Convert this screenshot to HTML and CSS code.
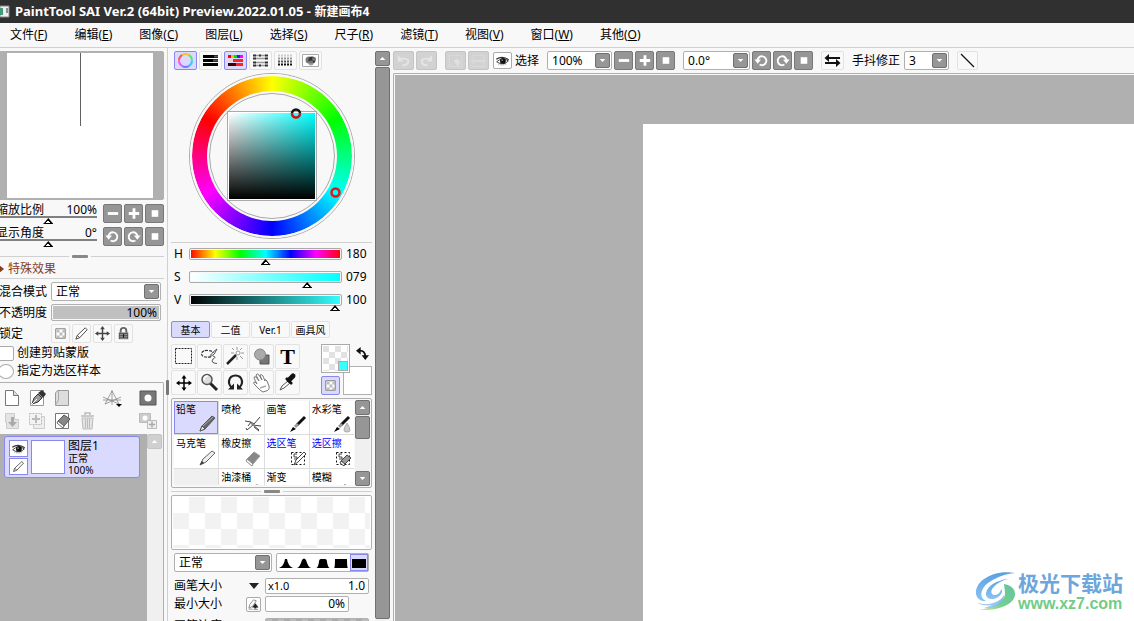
FILE: index.html
```html
<!DOCTYPE html>
<html lang="zh-CN">
<head>
<meta charset="utf-8">
<title>PaintTool SAI Ver.2</title>
<link rel="stylesheet" href="styles.css">
</head>
<body>
<svg class="sprite" aria-hidden="true">
  <symbol id="minus" viewBox="0 0 18 18"><path d="M4 9h11" stroke="#fff" stroke-width="3"/></symbol>
  <symbol id="plus" viewBox="0 0 18 18"><path d="M4 9h11M9.500 3.500v11" stroke="#fff" stroke-width="3"/></symbol>
  <symbol id="stop" viewBox="0 0 18 18"><path d="M6 5.500h7v7H6z" fill="#fff"/></symbol>
  <symbol id="ccw" viewBox="0 0 18 18"><path d="M4.700 9.500a4.700 4.700 0 1 1 2.300 3.800" fill="none" stroke="#fff" stroke-width="2"/><path d="M1.500 8h7L5 12.500z" fill="#fff"/></symbol>
  <symbol id="cw" viewBox="0 0 18 18"><path d="M13.300 9.500a4.700 4.700 0 1 0-2.300 3.800" fill="none" stroke="#fff" stroke-width="2"/><path d="M16.500 8h-7l3.500 4.500z" fill="#fff"/></symbol>
  <symbol id="down" viewBox="0 0 14 14"><path d="M4 5.500h6L7 8.500z" fill="#fff"/></symbol>
  <symbol id="up" viewBox="0 0 14 14"><path d="M4 8.500h6L7 5.500z" fill="#fff"/></symbol>
  <symbol id="eye" viewBox="0 0 18 18"><path d="M2 10.500Q9 4.500 16 9.500Q12 14 7.500 13Q5 12.500 2 10.500z" fill="#fff" stroke="#222"/><path d="M1.500 7.500Q8.500 2.500 16.500 8" fill="none" stroke="#333" stroke-width="1.500"/><path d="M4 13.500Q9 15.500 14 13" fill="none" stroke="#777" stroke-dasharray="1 1"/><circle cx="9.500" cy="9.500" r="3.500" fill="#111"/><circle cx="8.500" cy="8.500" r=".8" fill="#fff"/></symbol>
  <symbol id="pencil" viewBox="0 0 18 18"><path d="M3 15l1.500-4L13 3l2 2L7 13.500zM4.500 11L7 13.500" fill="#fff" stroke="#444"/></symbol>
  <symbol id="checks" viewBox="0 0 18 18"><path d="M4 4h10v10H4z" fill="#fff" stroke="#777"/><path d="M5 5h3v3H5zM11 5h3v3h-3zM8 8h3v3H8zM5 11h3v3H5zM11 11h3v3h-3z" fill="#bbb"/></symbol>
  <symbol id="move" viewBox="0 0 18 18"><path d="M9 3v12M3 9h12" stroke="currentColor" stroke-width="1.500"/><path d="M9 1L6.500 4.500h5zM9 17l-2.500-3.500h5zM1 9l3.500-2.500v5zM17 9l-3.500-2.500v5z" fill="currentColor"/></symbol>
</svg>

<header class="titlebar">
  <svg class="appicon" width="10" height="13" viewBox="0 0 10 13"><path d="M0 1h9v11H0z" fill="#eee" stroke="#888"/><path d="M0 3h3v7H0z" fill="#497"/><path d="M7 3v5" stroke="#234"/></svg>
  <span>PaintTool SAI Ver.2 (64bit) Preview.2022.01.05 - <span class="doc">新建画布4</span></span>
</header>
<nav class="menubar">
  <a href="#">文件(<u>F</u>)</a><a href="#">编辑(<u>E</u>)</a><a href="#">图像(<u>C</u>)</a><a href="#">图层(<u>L</u>)</a><a href="#">选择(<u>S</u>)</a><a href="#">尺子(<u>R</u>)</a><a href="#">滤镜(<u>T</u>)</a><a href="#">视图(<u>V</u>)</a><a href="#">窗口(<u>W</u>)</a><a href="#">其他(<u>O</u>)</a>
</nav>

<div class="workspace">
  <aside class="left">
    <div class="navigator"><div class="nav-paper"><i class="nav-stroke"></i></div></div>

    <div class="navrow">
      <div class="navslider"><div class="navlabel"><label for="zoom">缩放比例</label><output>100%</output></div><input id="zoom" class="line-range" type="range" value="52"></div>
      <button class="gbtn" aria-label="缩小"><svg><use href="#minus"/></svg></button><button class="gbtn" aria-label="放大"><svg><use href="#plus"/></svg></button><button class="gbtn" aria-label="重置缩放"><svg><use href="#stop"/></svg></button>
    </div>
    <div class="navrow">
      <div class="navslider"><div class="navlabel"><label for="angle">显示角度</label><output>0°</output></div><input id="angle" class="line-range" type="range" value="52"></div>
      <button class="gbtn" aria-label="左转"><svg><use href="#ccw"/></svg></button><button class="gbtn" aria-label="右转"><svg><use href="#cw"/></svg></button><button class="gbtn" aria-label="重置角度"><svg><use href="#stop"/></svg></button>
    </div>
    <div class="splitter left-split"><i></i></div>
    <button class="effects"><svg width="5" height="8" viewBox="0 0 5 8"><path d="M0 0l5 4-5 4z" fill="#843c1c"/></svg>特殊效果</button>

    <div class="props">
      <label for="blend">混合模式</label>
      <div class="combo"><select id="blend"><option>正常</option></select><span class="arrow"><svg><use href="#down"/></svg></span></div>
      <label for="opacity">不透明度</label>
      <input id="opacity" class="opacity" type="text" value="100%">
      <span>锁定</span>
      <div class="locks">
        <button class="fbtn" aria-label="锁定透明"><svg><use href="#checks"/></svg></button>
        <button class="fbtn" aria-label="锁定绘画"><svg><use href="#pencil"/></svg></button>
        <button class="fbtn dim" aria-label="锁定移动"><svg><use href="#move"/></svg></button>
        <button class="fbtn" aria-label="锁定全部"><svg viewBox="0 0 18 18"><path d="M6 8V6q0-3 3-3t3 3v2" fill="none" stroke="#666" stroke-width="2"/><path d="M4 8h10v7H4z" fill="#555"/><path d="M5 10h8M5 12h8M5 14h8" stroke="#999"/><path d="M8.500 9.500h1v4h-1z" fill="#111"/></svg></button>
      </div>
    </div>
    <div class="ticks">
      <div class="tick"><input id="clip" type="checkbox"><label for="clip">创建剪贴蒙版</label></div>
      <div class="tick"><input id="sample" type="radio"><label for="sample">指定为选区样本</label></div>
    </div>

    <section class="layers">
      <div class="layertools">
        <button aria-label="新建图层"><svg viewBox="0 0 17 18"><path d="M1.500 1.500h8l5 5v10h-13z" fill="#fff" stroke="#777"/><path d="M9.500 1.500v5h5" fill="#ddd" stroke="#777"/></svg></button>
        <button aria-label="新建钢笔图层"><svg viewBox="0 0 17 18"><path d="M1.500 1.500h13v15h-13z" fill="#fff" stroke="#999"/><path d="M3 15l2-6 4-4 4 4-4 4z" fill="#999" stroke="#333"/><path d="M3 15l5-5" stroke="#fff"/><path d="M9 4l5 5 3-4-4-4z" fill="#333"/></svg></button>
        <button aria-label="新建图层组"><svg viewBox="0 0 17 18"><path d="M1.500 4l2-2.500h11v15h-13z" fill="#ddd" stroke="#999"/><path d="M4.500 2v9l-3 5" fill="none" stroke="#aaa"/></svg></button>
        <button class="persp" aria-label="透视尺"><svg viewBox="0 0 22 18"><path d="M1 11h18M10 1v15M10 2L3 15M10 2l7 13M1 8l16 7M19 8L3 15" fill="none" stroke="#888" stroke-width=".8"/><path d="M14 15h6l-3 3z" fill="#000"/></svg></button>
        <button class="mask" aria-label="图层蒙版"><svg viewBox="0 0 18 18"><path d="M1 2h16v14H1z" fill="#777" stroke="#555"/><circle cx="9" cy="9" r="3.500" fill="#fff"/></svg></button>
        <button aria-label="向下合并"><svg viewBox="0 0 17 18"><path d="M1.500 1.500h9v6h4v9h-12v-6h-1z" fill="#e4e4e4" stroke="#ccc"/><path d="M8.500 5v6" stroke="#aaa" stroke-width="3"/><path d="M4 10h9l-4.500 5z" fill="#aaa"/></svg></button>
        <button aria-label="复制"><svg viewBox="0 0 17 18"><path d="M4.500 4.500h11v12h-11z" fill="#eee" stroke="#ccc"/><path d="M.5 1.500h12v11H.5z" fill="#f3f3f3" stroke="#bbb" stroke-dasharray="2 1"/><path d="M3 7h8M7 3v8" stroke="#bbb" stroke-width="2"/></svg></button>
        <button aria-label="清除图层"><svg viewBox="0 0 17 18"><path d="M1.500 1.500h13v15h-13z" fill="#fff" stroke="#777"/><path d="M4 9l6-6 6 4-6 7z" fill="#888" stroke="#555"/><path d="M4 9l6 5-1 2-6-5z" fill="#fff" stroke="#666"/></svg></button>
        <button aria-label="删除图层"><svg viewBox="0 0 17 18"><path d="M2 4h13M6 3V1h5v2" fill="none" stroke="#bbb" stroke-width="1.500"/><path d="M3 6h11l-1 11H4z" fill="#e4e4e4" stroke="#bbb"/><path d="M6.500 7v9M8.500 7v9M10.500 7v9" stroke="#bbb"/></svg></button>
        <button class="mask" aria-label="应用蒙版"><svg viewBox="0 0 18 18"><path d="M.5 1.500h11v9H.5z" fill="#ccc" stroke="#bbb"/><circle cx="6" cy="6" r="2.500" fill="#fff"/><path d="M8.500 8.500h9v8h-9z" fill="#eee" stroke="#bbb"/><path d="M10 12.500h6M13 9.500v6" stroke="#aaa" stroke-width="1.500"/></svg></button>
      </div>
      <div class="layerlist">
        <div class="layerarea">
          <div class="layer">
            <div class="layerbtns"><button aria-label="显示"><svg><use href="#eye"/></svg></button><button aria-label="编辑"><svg><use href="#pencil"/></svg></button></div>
            <i class="thumb"></i>
            <div class="layertext"><span>图层1</span><small>正常</small><small>100%</small></div>
          </div>
        </div>
        <div class="lightbar"><button aria-label="向上"><svg><use href="#up"/></svg></button></div>
      </div>
    </section>
  </aside>

  <section class="middle">
    <i class="grip"></i>
    <div class="panel">
      <div class="modes">
        <button class="fbtn on" aria-label="色轮"><svg viewBox="0 0 21 17"><g fill="none" stroke-width="2"><path d="M4 8.500a6.500 6.500 0 0 1 3.250-5.600" stroke="#f55"/><path d="M7.250 2.900a6.500 6.500 0 0 1 6.500 0" stroke="#fb3"/><path d="M13.750 2.900a6.500 6.500 0 0 1 3.250 5.600" stroke="#5e5"/><path d="M17 8.500a6.500 6.500 0 0 1-3.250 5.600" stroke="#3cf"/><path d="M13.750 14.100a6.500 6.500 0 0 1-6.500 0" stroke="#77f"/><path d="M7.250 14.100A6.500 6.500 0 0 1 4 8.500" stroke="#f5f"/></g></svg></button>
        <button class="fbtn" aria-label="RGB滑块"><svg viewBox="0 0 21 17"><path d="M3 4.500h15M3 8.500h15M3 12.500h15" stroke="#000" stroke-width="3"/><path d="M14 4.500h4M13 8.500h5" stroke="#555" stroke-width="2"/></svg></button>
        <button class="fbtn on" aria-label="HSV滑块"><svg viewBox="0 0 21 17"><path d="M3 4.500h3" stroke="#f00" stroke-width="3"/><path d="M6 4.500h3" stroke="#fb0" stroke-width="3"/><path d="M9 4.500h3" stroke="#0d0" stroke-width="3"/><path d="M12 4.500h3" stroke="#22f" stroke-width="3"/><path d="M15 4.500h3" stroke="#f0f" stroke-width="3"/><path d="M3 8.500h5" stroke="#fcc" stroke-width="3"/><path d="M8 8.500h10M11 12.500h7" stroke="#f22" stroke-width="3"/><path d="M3 12.500h8" stroke="#400" stroke-width="3"/></svg></button>
        <button class="fbtn" aria-label="混色"><svg viewBox="0 0 21 17"><path d="M5 3.500h11M5 6.500h11M5 10.500h11M5 13.500h11" stroke="#999" stroke-width="1.500"/><path d="M3 3.500h3M9 3.500h2M15 3.500h3M3 6.500h3M15 6.500h3M3 10.500h3M15 10.500h3M3 13.500h3M9 13.500h2M15 13.500h3" stroke="#333" stroke-width="2"/></svg></button>
        <button class="fbtn" aria-label="色板"><svg viewBox="0 0 21 17"><path d="M3 3.500h15" stroke="#ccc" stroke-width="2" stroke-dasharray="2 1"/><path d="M3 6.500h15" stroke="#999" stroke-width="2" stroke-dasharray="2 1"/><path d="M3 9.500h15" stroke="#555" stroke-width="2" stroke-dasharray="2 1"/><path d="M3 12.500h15" stroke="#111" stroke-width="2" stroke-dasharray="2 1"/></svg></button>
        <button class="fbtn" aria-label="草稿"><svg viewBox="0 0 21 17"><path d="M2.500 2.500h16v12h-16z" fill="#fff" stroke="#aaa"/><circle cx="9" cy="8" r="3.500" fill="#777"/><circle cx="12" cy="8" r="3.500" fill="#333"/><circle cx="11" cy="11" r="2.500" fill="#888" opacity=".8"/><circle cx="14" cy="7" r="2" fill="#777"/></svg></button>
      </div>
      <div class="wheel">
        <div class="hole"></div>
        <div class="sv"></div>
        <svg class="marks" viewBox="0 0 166 166"><path d="M103 40.500a4 4 0 0 1 8 0" fill="none" stroke="#111" stroke-width="2.500"/><path d="M103 40.500a4 4 0 0 0 8 0" fill="none" stroke="#c11" stroke-width="2.500"/><circle cx="146.500" cy="119.500" r="4" fill="none" stroke="#e11" stroke-width="2.500"/></svg>
      </div>
      <div class="hsv">
        <label for="h">H</label><input class="range hue" id="h" type="range" value="50"><output>180</output>
        <label for="s">S</label><input class="range sat" id="s" type="range" value="80"><output>079</output>
        <label for="v">V</label><input class="range val" id="v" type="range" value="100"><output>100</output>
      </div>
      <div class="tabs"><button class="fbtn on">基本</button><button class="fbtn">二值</button><button class="fbtn">Ver.1</button><button class="fbtn">画具风</button></div>
      <div class="toolrow">
        <div class="tools">
          <button class="fbtn" aria-label="矩形选区"><svg viewBox="0 0 23 23"><path d="M3.500 3.500h16v15h-16z" fill="none" stroke="#222" stroke-dasharray="2 1"/></svg></button>
          <button class="fbtn" aria-label="套索"><svg viewBox="0 0 23 23"><path d="M13 12Q4 13 3.500 9Q4 5 10 5.500Q15 6 15 8" fill="none" stroke="#333" stroke-width="1.200" stroke-dasharray="3 1"/><path d="M19 4Q17 10 12 12Q12 9 19 4M15 11Q19 12 15 14Q12 18 19 18.500" fill="none" stroke="#555"/></svg></button>
          <button class="fbtn" aria-label="魔棒"><svg viewBox="0 0 23 23"><path d="M3 19L12 10" stroke="#222" stroke-width="2.500"/><path d="M13 2v3M13 12v3M7 8h3M17 8h3M8 3l2 2M18 3l-2 2M16 11l3 3" stroke="#999"/><circle cx="14" cy="8" r="2" fill="#fff" stroke="#999"/></svg></button>
          <button class="fbtn" aria-label="形状"><svg viewBox="0 0 23 23"><path d="M10 10h9v9h-9z" fill="#777" stroke="#555"/><circle cx="10" cy="9.500" r="5.500" fill="#aaa" stroke="#888"/></svg></button>
          <button class="fbtn texttool" aria-label="文字">T</button>
          <button class="fbtn" aria-label="移动"><svg viewBox="0 0 23 23"><use href="#move" x="3" y="3" width="18" height="18"/></svg></button>
          <button class="fbtn" aria-label="缩放"><svg viewBox="0 0 23 23"><path d="M12 12l7 7" stroke="#222" stroke-width="3"/><circle cx="9" cy="8.500" r="5" fill="#ddd" stroke="#555" stroke-width="1.500"/><path d="M6 9q0-4 4-4" fill="none" stroke="#fff" stroke-width="1.500"/></svg></button>
          <button class="fbtn" aria-label="旋转"><svg viewBox="0 0 23 23"><path d="M8.500 17Q4.500 14 5 10Q6 4.500 11.500 4.500T18 10Q18.500 14 14.500 17" fill="none" stroke="#222" stroke-width="2.200"/><path d="M4 18.500h6v-6zM19 18.500h-6v-6z" fill="#222"/></svg></button>
          <button class="fbtn" aria-label="抓手"><svg viewBox="0 0 23 23"><path d="M9 18L5 14Q3 12 4 11q2 0 3 2L4 7q0-2 2-1l3 4-3-6q1-2 3 0l3 5-2-5q2-1 3 1l2 5q0-3 2 0l2 5q1 4-3 5l-3 1Q11 20 9 18z" fill="#fff" stroke="#777"/><path d="M10 17l6-2" stroke="#aaa" stroke-width="1.500"/></svg></button>
          <button class="fbtn" aria-label="吸管"><svg viewBox="0 0 23 23"><path d="M4 19l2-4 6-5 2 2-6 5z" fill="#fff" stroke="#555"/><path d="M10 7l6 6" stroke="#111" stroke-width="2.500"/><path d="M13 9l4-4" stroke="#111" stroke-width="5" stroke-linecap="round"/></svg></button>
        </div>
        <div class="swatches">
          <div class="fg"><i></i></div>
          <svg class="swap" viewBox="0 0 14 14"><path d="M3 4Q10 3 10 11" fill="none" stroke="#111" stroke-width="2"/><path d="M0 4l5-4v8zM10 14l-4-5h8z" fill="#111"/></svg>
          <button class="fbtn on trans" aria-label="透明色"><svg><use href="#checks"/></svg></button>
          <div class="bg"></div>
        </div>
      </div>
      <div class="brushframe">
        <div class="brushes">
          <button class="sel">铅笔<svg viewBox="0 0 18 18"><path d="M2 16l2-5L14 1l3 2L7 14z" fill="#666" stroke="#555"/><path d="M2 16l2-5 3 3z" fill="#eee" stroke="#555"/><path d="M5 11L15 2" stroke="#aaa"/></svg></button>
          <button>喷枪<svg viewBox="0 0 18 18"><path d="M1 6l6 1 3 2 6-7M3 15l6-5 6 5M4 11l3-4M8 10l9 1M10 12l5 4M3 15l-1-2" fill="none" stroke="#444"/><path d="M7 8l4 3" stroke="#888" stroke-width="2"/></svg></button>
          <button>画笔<svg viewBox="0 0 18 18"><path d="M8 10L16 2" stroke="#111" stroke-width="3"/><path d="M6 12l3-3" stroke="#999" stroke-width="3"/><path d="M1 17l3-5 3 2z" fill="#000"/></svg></button>
          <button>水彩笔<svg viewBox="0 0 18 18"><path d="M7 10L15 2" stroke="#111" stroke-width="3"/><path d="M5 12l3-3" stroke="#999" stroke-width="3"/><path d="M0 17l3-5 3 2z" fill="#000"/><path d="M13 8q-3 5-3 7t3 2 3-2-3-7z" fill="#ccc" stroke="#aaa"/></svg></button>
          <button>马克笔<svg viewBox="0 0 18 18"><path d="M2 16l3-6 9-8 3 2-9 9z" fill="#eee" stroke="#666"/><path d="M2 16l2-4 2 2z" fill="#333"/></svg></button>
          <button>橡皮擦<svg viewBox="0 0 18 18"><path d="M3 10L10 3l6 4-7 8z" fill="#888" stroke="#999"/><path d="M3 10l6 5-1 2-6-5z" fill="#fff" stroke="#888"/></svg></button>
          <button class="blue">选区笔<svg viewBox="0 0 18 18"><path d="M2.500 3.500h13v12h-13z" fill="none" stroke="#111" stroke-dasharray="2 2"/><path d="M8 5H5v3h3v2H5" fill="none" stroke="#444"/><path d="M5 16l2-5 8-8 2 2-8 8z" fill="#fff" stroke="#444"/></svg></button>
          <button class="blue">选区擦<svg viewBox="0 0 18 18"><path d="M2.500 3.500h13v12h-13z" fill="none" stroke="#111" stroke-dasharray="2 2"/><path d="M7 12l6-6 4 3-6 6z" fill="#999" stroke="#444"/><path d="M7 12l4 3-1 2-4-3z" fill="#fff" stroke="#444"/><path d="M8 5H5v3h3v2H5" fill="none" stroke="#444"/></svg></button>
          <i class="empty"></i>
          <button>油漆桶<svg viewBox="0 0 18 18"><path d="M10 3q3-3 6 0" fill="none" stroke="#aaa"/></svg></button>
          <button>渐变</button>
          <button>模糊<svg viewBox="0 0 18 18"><path d="M11 1v2" stroke="#aaa" stroke-width="2"/></svg></button>
        </div>
        <div class="scroll brushscroll"><button aria-label="向上"><svg><use href="#up"/></svg></button><i></i><button class="end" aria-label="向下"><svg><use href="#down"/></svg></button></div>
      </div>
      <div class="splitter"><i></i></div>
      <div class="preview"></div>
      <div class="shaperow">
        <div class="combo"><select aria-label="笔刷模式"><option>正常</option></select><span class="arrow"><svg><use href="#down"/></svg></span></div>
        <div class="shapes">
          <button aria-label="尖"><svg viewBox="0 0 16 14"><path d="M1 12q5-2 6-9h2q1 7 6 9z"/></svg></button><button aria-label="圆"><svg viewBox="0 0 16 14"><path d="M1 12Q4 11 6 4q2-3 4 0 2 7 5 8z"/></svg></button><button aria-label="钝"><svg viewBox="0 0 16 14"><path d="M1 12q2 0 3-6 0-3 2-3h4q2 0 2 3 1 6 3 6z"/></svg></button><button aria-label="平"><svg viewBox="0 0 16 14"><path d="M1 12q1 0 1-9h12q0 9 1 9z"/></svg></button><button class="sel" aria-label="方"><svg viewBox="0 0 16 14"><path d="M1 3h14v9H1z"/></svg></button>
        </div>
      </div>
      <div class="sizerow"><label for="size">画笔大小</label><svg class="tri" width="10" height="6" viewBox="0 0 10 6"><path d="M0 0h10L5 6z" fill="#222"/></svg><div class="field"><span>x1.0</span><input id="size" type="text" value="1.0"></div></div>
      <div class="sizerow"><label for="min">最小大小</label><button class="penbtn" aria-label="笔压"><svg viewBox="0 0 14 14"><path d="M2 11l1-4 4-5 3 1-4 6zM2 12h4" fill="#fff" stroke="#888"/><path d="M9 6l3 4h-2v1H8v-1H6zM7 12.500h5" fill="#222" stroke="#222" stroke-width=".5"/></svg></button><div class="field short"><input id="min" type="text" value="0%"></div></div>
      <div class="sizerow last"><label for="density">画笔浓度</label><div class="field filled"><input id="density" type="text" value="100"></div></div>
    </div>
    <div class="scroll"><button aria-label="向上"><svg><use href="#up"/></svg></button><i></i></div>
  </section>

  <main class="right">
    <div class="toolbar">
      <div class="group">
        <button class="dis" aria-label="撤销"><svg viewBox="0 0 20 18"><path d="M5 7h6q4 0 4 3t-4 4H9" fill="none" stroke="#e4e4e4" stroke-width="2"/><path d="M4 3v7h6z" fill="#e4e4e4"/></svg></button>
        <button class="dis" aria-label="重做"><svg viewBox="0 0 20 18"><path d="M15 7H9q-4 0-4 3t4 4h2" fill="none" stroke="#e4e4e4" stroke-width="2"/><path d="M16 3v7h-6z" fill="#e4e4e4"/></svg></button>
      </div>
      <div class="group">
        <button class="dis" aria-label="取消选择"><svg viewBox="0 0 20 18"><path d="M3.500 3.500h13v12h-13z" fill="none" stroke="#e0e0e0" stroke-dasharray="2 1"/><path d="M8 9l4 6 3-4-3-4z" fill="#e0e0e0"/></svg></button>
        <button class="dis" aria-label="反选"><svg viewBox="0 0 20 18"><path d="M4.500 8V3.500h11V8M4.500 11v4.500h11V11" fill="none" stroke="#e0e0e0" stroke-dasharray="2 1"/><path d="M2 9.500h16" stroke="#e4e4e4"/></svg></button>
      </div>
      <div class="group show"><button class="eyebtn" id="selshow" aria-label="选择"><svg><use href="#eye"/></svg></button><label for="selshow">选择</label></div>
      <div class="group zoomgroup">
        <div class="combo"><select aria-label="缩放"><option>100%</option></select><span class="arrow"><svg><use href="#down"/></svg></span></div>
        <button class="gbtn" aria-label="缩小视图"><svg><use href="#minus"/></svg></button><button class="gbtn" aria-label="放大视图"><svg><use href="#plus"/></svg></button><button class="gbtn" aria-label="重置视图"><svg><use href="#stop"/></svg></button>
      </div>
      <div class="group anglegroup">
        <div class="combo"><select aria-label="角度"><option>0.0°</option></select><span class="arrow"><svg><use href="#down"/></svg></span></div>
        <button class="gbtn" aria-label="视图左转"><svg><use href="#ccw"/></svg></button><button class="gbtn" aria-label="视图右转"><svg><use href="#cw"/></svg></button><button class="gbtn" aria-label="重置视图角度"><svg><use href="#stop"/></svg></button>
      </div>
      <button class="fbtn flip" aria-label="水平翻转"><svg viewBox="0 0 21 17"><path d="M5 6h13M3 11h13" stroke="#111" stroke-width="2"/><path d="M2.500 6L7 2v8zM18.500 11L14 7v8z" fill="#111"/></svg></button>
      <div class="group steady"><label for="stab">手抖修正</label><div class="combo"><select id="stab"><option>3</option></select><span class="arrow"><svg><use href="#down"/></svg></span></div></div>
      <button class="fbtn linebtn" aria-label="直线"><svg viewBox="0 0 19 17"><path d="M3 2l13 13" stroke="#111" stroke-width="1.300"/></svg></button>
    </div>
    <div class="canvas"><div class="paper"></div></div>
  </main>
</div>

<div class="watermark">
  <svg viewBox="0 0 42 42"><defs><linearGradient id="wb" x1="0" y1="0" x2="0" y2="1"><stop offset="0" stop-color="#5aa0e0"/><stop offset="1" stop-color="#8cc4f2"/></linearGradient><linearGradient id="wg" x1="1" y1="0" x2="0" y2="1"><stop offset="0" stop-color="#62c4a0"/><stop offset=".6" stop-color="#74d08c"/><stop offset="1" stop-color="#d4ec9c"/></linearGradient></defs>
  <path d="M40 3C22 0 3 8 1 21c-1 7 5 11 10 10-7-3-6-12 2-18C20 8 29 4 40 3z" fill="url(#wb)"/><path d="M33 9C22 10 12 16 11 23c-1 6 7 8 12 4 4-3 5-6 3-8 0 4-6 8-9 5-3-4 4-12 16-15z" fill="url(#wb)"/><path d="M29 14c6 1 11 4 11 10 0 10-16 17-36 16 13-2 25-7 26-16 0-4-1-8-1-10z" fill="url(#wg)"/><path d="M2 33c11 3 23 0 27-8 0 9-10 14-20 13 3-1 6-2 8-3-6 1-11 0-15-2z" fill="url(#wb)" opacity=".8"/></svg>
  <div><b>极光下载站</b><span>www.xz7.com</span></div>
</div>
</body>
</html>
```
FILE: styles.css
```css
* { box-sizing: border-box; }
body {
  margin: 0; height: 100vh; overflow: hidden;
  display: flex; flex-direction: column;
  background: #f8f8f8; color: #000;
  font: 12px/14px "Noto Sans", "Noto Sans CJK SC", sans-serif;
}
button, input, select { font: inherit; color: inherit; margin: 0; padding: 0; }
button { display: flex; align-items: center; justify-content: center; border: 0; background: none; flex: none; }
svg { display: block; flex: none; }
i { display: block; }
.sprite { position: absolute; width: 0; height: 0; }

.titlebar { flex: none; height: 23px; background: #303030; color: #fff; font-size: 13px; font-weight: 700; display: flex; align-items: center; gap: 5px; white-space: nowrap; }
.doc { font-size: 12px; }
.menubar { flex: none; height: 25px; display: flex; align-items: center; gap: 27px; padding-left: 10px; border-bottom: 1px solid #d0d0d0; white-space: nowrap; }
.menubar a { color: #000; text-decoration: none; }
.workspace { flex: 1; min-height: 0; display: grid; grid-template-columns: 167px 226px 1fr; }

/* shared controls */
.gbtn { width: 19px; height: 19px; background: #969696; border: 1px solid #787878; border-radius: 2px; }
.gbtn svg { width: 17px; height: 17px; }
.fbtn { width: 23px; height: 19px; border: 1px solid #e2e2e2; border-radius: 2px; background: #f9f9f9; }
.fbtn.on { border-color: #8888f0; background: #dadaff; }
.fbtn svg { width: 100%; height: 100%; }
.combo { position: relative; height: 19px; }
.combo select { width: 100%; height: 100%; appearance: none; border: 1px solid #b0b0b0; border-radius: 2px; background: #fff; padding-left: 4px; }
.arrow { position: absolute; right: 2px; top: 2px; width: 15px; height: 15px; background: #969696; border: 1px solid #707070; border-radius: 2px; pointer-events: none; }
.arrow svg { width: 13px; height: 13px; }
.splitter { height: 7px; display: flex; align-items: center; gap: 3px; }
.splitter::before, .splitter::after { content: ""; flex: 1; height: 1px; background: #d0d0d0; }
.splitter i { width: 16px; height: 3px; border-radius: 1px; background: #888; }

/* left column */
.left { margin-left: -4px; padding: 3px 3px 0 0; min-height: 0; display: flex; flex-direction: column; white-space: nowrap; overflow: hidden; }
.navigator { flex: none; height: 149px; border: 1px solid #b0b0b0; border-radius: 2px; background: #b0b0b0; padding: 1px 10px 1px 10px; }
.nav-paper { height: 100%; background: #fff; }
.nav-stroke { margin-left: 73px; width: 1px; height: 73px; background: #606060; }
.navrow { display: flex; gap: 2px; height: 19px; margin-top: 4px; }
.navslider { flex: 1; margin-right: 4px; }
.navlabel { display: flex; justify-content: space-between; height: 12px; line-height: 12px; }
.line-range { display: block; appearance: none; width: 100%; height: 2px; background: #808080; }
.line-range::-webkit-slider-runnable-track { height: 2px; }
input[type=range]::-webkit-slider-thumb {
  appearance: none; width: 10px; height: 6px; margin-top: 2px;
  background: linear-gradient(to top, #000 1px, transparent 1px), conic-gradient(from 141deg at 50% 2px, #fff 78deg, #000 0);
  clip-path: polygon(50% 0, 100% 100%, 0 100%);
}
.left-split { margin-top: 7px; }
.effects { justify-content: flex-start; gap: 4px; height: 19px; padding: 0 0 1px 3px; color: #843c1c; border-bottom: 1px solid #d0d0d0; }
.props { display: grid; grid-template-columns: 48px 110px; grid-template-rows: 19px 17px 19px; gap: 3px 4px; align-items: center; padding: 3px 0 0 3px; }
.opacity { width: 100%; height: 17px; border: 1px solid #b0b0b0; outline: 1px solid #f8f8f8; outline-offset: -2px; background: #c0c0c0; text-align: right; padding-right: 3px; border-radius: 2px; }
.locks { display: flex; gap: 2px; }
.locks .fbtn { width: 19px; }
.dim { color: #444; }
.ticks { padding-top: 1px; }
.tick { display: flex; align-items: center; gap: 3px; height: 18px; padding-left: 2px; }
.tick input { appearance: none; width: 16px; height: 15px; background: #fff; border: 1px solid #aaa; border-radius: 2px; }
.tick input[type=radio] { border-radius: 50%; }
.layers { flex: 1; min-height: 0; margin-top: 2px; display: flex; flex-direction: column; border: solid #b0b0b0; border-width: 1px 1px 0 0; border-radius: 0 2px 0 0; }
.layertools { flex: none; height: 51px; display: grid; grid-template-columns: repeat(4, 17px) 1fr 18px; column-gap: 8px; row-gap: 5px; align-content: start; padding: 6px 6px 0 8px; }
.layertools svg { width: 17px; height: 18px; }
.layertools .persp { grid-column: 4 / 6; justify-self: end; margin-right: 7px; }
.layertools .persp svg { width: 22px; }
.layertools .mask { grid-column: 6; }
.layertools .mask svg { width: 18px; }
.layerlist { flex: 1; display: flex; }
.layerarea { flex: 1; background: #b0b0b0; padding: 2px 7px 0 8px; }
.layer { height: 42px; display: flex; gap: 3px; padding: 3px 4px; border: 1px solid #8888f0; border-radius: 3px; background: #dadaff; }
.layerbtns { display: grid; gap: 1px; }
.layerbtns button { width: 19px; height: 17px; background: #fff; border: 1px solid #8888f0; }
.layerbtns svg { width: 17px; height: 15px; }
.thumb { width: 34px; height: 34px; background: #fff; border: 1px solid #8888f0; }
.layertext { display: flex; flex-direction: column; line-height: 12px; }
.layertext small { font-size: 10px; line-height: 12px; }
.lightbar { width: 16px; background: #f0f0f0; }
.lightbar button { width: 15px; height: 15px; background: #d0d0d0; border: 1px solid #c4c4c4; border-radius: 2px; }
.lightbar svg { width: 13px; height: 13px; }

/* middle column */
.middle { position: relative; border-left: 1px solid #d0d0d0; padding: 3px 3px 0 3px; display: flex; gap: 3px; min-height: 0; }
.grip { position: absolute; left: -2px; top: 332px; width: 3px; height: 15px; border-radius: 1px; background: #777; }
.panel { flex: 1; min-width: 0; overflow: hidden; display: flex; flex-direction: column; }
.panel > * { flex: none; }
.modes { display: flex; gap: 2px; padding-left: 3px; }
.wheel { align-self: center; margin: 3px 0; width: 166px; height: 166px; border-radius: 50%; display: grid; place-items: center; border: 1px solid #aaa; position: relative; }
.wheel::before { content: ""; position: absolute; inset: 0; border-radius: 50%; border: 2px solid #f8f8f8; background: conic-gradient(#ff0, #0f0, #0ff, #00f, #f0f, #f00, #ff0) padding-box; }
.hole { grid-area: 1 / 1; z-index: 1; width: 126px; height: 126px; border-radius: 50%; border: 1px solid #aaa; background: #f8f8f8; box-shadow: 0 0 0 2px #f8f8f8; }
.sv { grid-area: 1 / 1; z-index: 2; width: 90px; height: 90px; border: 1px solid #aaa; padding: 1px; background: linear-gradient(transparent, #000) content-box, linear-gradient(to right, #fff, #0ff) content-box, #fff; }
.marks { position: absolute; z-index: 3; inset: -1px; width: 166px; height: 166px; }
.hsv { border-top: 1px solid #d0d0d0; padding: 5px 4px 0 3px; display: grid; grid-template-columns: 12px 1fr 23px; grid-auto-rows: 12px; gap: 11px 3px; line-height: 12px; }
.hsv output { padding-left: 1px; }
.range { appearance: none; width: 100%; height: 12px; background: none; }
.range::-webkit-slider-runnable-track { height: 12px; border: 1px solid #aaa; border-radius: 2px; padding: 1px; background-clip: content-box; }
.range::-webkit-slider-thumb { margin-top: 9px !important; }
.hue::-webkit-slider-runnable-track { background-image: linear-gradient(to right, #f00, #ff0, #0f0, #0ff, #00f, #f0f, #f00); }
.sat::-webkit-slider-runnable-track { background-image: linear-gradient(to right, #fff, #0ff); }
.val::-webkit-slider-runnable-track { background-image: linear-gradient(to right, #000, #36ffff); }
.tabs { display: flex; gap: 1px; margin-top: 15px; font-size: 10px; }
.tabs .fbtn { width: 39px; height: 17px; }
.toolrow { display: flex; justify-content: space-between; margin-top: 6px; }
.tools { display: grid; grid-template-columns: repeat(5, 25px); grid-auto-rows: 25px; gap: 1px; }
.tools .fbtn { width: 25px; height: 25px; }
.texttool { font: 700 22px/22px "Liberation Serif", serif; }
.swatches { position: relative; width: 51px; height: 51px; }
.fg { position: absolute; left: 0; top: 0; z-index: 1; width: 29px; height: 29px; border: 1px solid #aaa; outline: 1px solid #fff; outline-offset: -2px; background: repeating-conic-gradient(#fff 0 25%, #e2e2e2 0 50%) 1px 1px / 12px 12px; }
.fg i { position: absolute; right: 1px; bottom: 1px; width: 10px; height: 10px; background: #36ffff; border: 1px solid #aaa; }
.bg { position: absolute; right: 0; bottom: 0; width: 29px; height: 29px; background: #fff; border: 1px solid #b0b0b0; }
.swap { position: absolute; right: 3px; top: 3px; width: 13px; height: 13px; }
.trans { position: absolute; left: 0; bottom: 0; width: 19px; }
.brushframe { height: 90px; margin-top: 3px; border: 1px solid #b0b0b0; border-radius: 2px; padding: 1px; display: flex; gap: 1px; }
.brushes { flex: 1; margin: 1px 0 1px 1px; overflow: hidden; display: grid; grid-template-columns: repeat(4, 1fr); grid-auto-rows: 33px; gap: 1px; background: #dcdcdc; font-size: 10px; }
.brushes button { background: #fff; position: relative; align-items: flex-start; justify-content: flex-start; padding: 1px 0 0 2px; line-height: 14px; }
.brushes svg { position: absolute; right: 2px; bottom: 1px; width: 18px; height: 18px; }
.brushes .sel { border: 1px solid #8888f0; background: #dadaff; padding: 0 0 0 1px; }
.brushes .sel svg { right: 1px; bottom: 0; }
.brushes .blue { color: #00f; }
.empty { background: #f0f0f0; }
.scroll { width: 15px; flex: none; display: flex; flex-direction: column; gap: 1px; background: #f0f0f0; }
.scroll button { width: 15px; height: 15px; background: #969696; border: 1px solid #707070; border-radius: 2px; }
.scroll button svg { width: 13px; height: 13px; }
.scroll i { flex: 1; margin-bottom: 2px; background: #969696; border: 1px solid #707070; border-radius: 2px; }
.brushscroll i { flex: none; height: 23px; }
.scroll .end { margin-top: auto; }
.preview { height: 55px; border: 1px solid #b0b0b0; border-radius: 2px; padding: 1px; background: repeating-conic-gradient(#f2f2f2 0 25%, #fff 0 50%) 0 0 / 32px 32px content-box, #fff; }
.shaperow { display: flex; justify-content: space-between; padding: 0 3px; margin-top: 3px; }
.shaperow .combo { width: 98px; height: 19px; }
.shapes { display: flex; align-items: center; justify-content: space-between; width: 93px; height: 19px; border: 1px solid #b0b0b0; border-radius: 2px; background: #fff; }
.shapes button { width: 18px; height: 17px; }
.shapes svg { width: 16px; height: 14px; }
.shapes .sel { border: 1px solid #8888f0; background: #dadaff; }
.sizerow { display: grid; grid-template-columns: 69px 16px 104px; gap: 0 3px; align-items: center; height: 16px; padding-left: 3px; margin-top: 2px; justify-items: start; }
.sizerow .tri { justify-self: center; }
.shaperow + .sizerow { margin-top: 6px; }
.sizerow label { grid-column: 1; }
.field { grid-column: 3; display: flex; justify-content: space-between; width: 100%; height: 16px; border: 1px solid #b0b0b0; border-radius: 2px; background: #fff; padding: 0 3px 0 2px; line-height: 14px; overflow: hidden; }
.field input { min-width: 0; width: 100%; border: 0; background: none; text-align: right; height: 14px; }
.field span { font-size: 11px; }
.field.short { width: 84px; }
.field.filled { background: repeating-conic-gradient(#aaa 0 25%, #bbb 0 50%) 0 0 / 12px 12px; }
.sizerow.last { margin-top: 6px; }
.penbtn { width: 15px; height: 15px; border: 1px solid #aaa; border-radius: 2px; background: #fff; }
.penbtn svg { width: 13px; height: 13px; }

/* right column */
.right { min-width: 0; display: flex; flex-direction: column; }
.toolbar { flex: none; height: 25px; display: flex; align-items: flex-start; gap: 8px; padding-top: 3px; white-space: nowrap; }
.group { display: flex; align-items: center; gap: 2px; height: 19px; }
.show { gap: 3px; margin-left: -4px; }
.dis { width: 21px; height: 19px; background: #d2d2d2; border: 1px solid #c4c4c4; border-radius: 2px; }
.dis svg { width: 19px; height: 17px; }
.eyebtn { width: 19px; height: 17px; background: #fff; border: 1px solid #aaa; border-radius: 2px; }
.eyebtn svg { width: 17px; height: 15px; }
.zoomgroup .combo { width: 65px; }
.anglegroup .combo { width: 67px; }
.steady { gap: 4px; }
.steady .combo { width: 45px; }
.linebtn { width: 21px; }
.canvas { flex: 1; min-height: 0; display: flow-root; overflow: hidden; border: solid #b0b0b0; border-width: 1px 0 0 1px; padding: 1px 0 0 1px; border-radius: 2px 0 0 0; background: #b0b0b0 content-box; }
.paper { margin: 49px 0 0 248px; height: 100%; background: #fff; }

.watermark { position: absolute; right: 11px; bottom: 9px; display: flex; align-items: center; gap: 1px; }
.watermark svg { width: 42px; height: 42px; }
.watermark div { display: flex; flex-direction: column; }
.watermark b { font-size: 21px; line-height: 24px; color: #6ca6dc; }
.watermark span { font: 700 16px/17px "Liberation Sans", sans-serif; color: #70cc88; }
```
